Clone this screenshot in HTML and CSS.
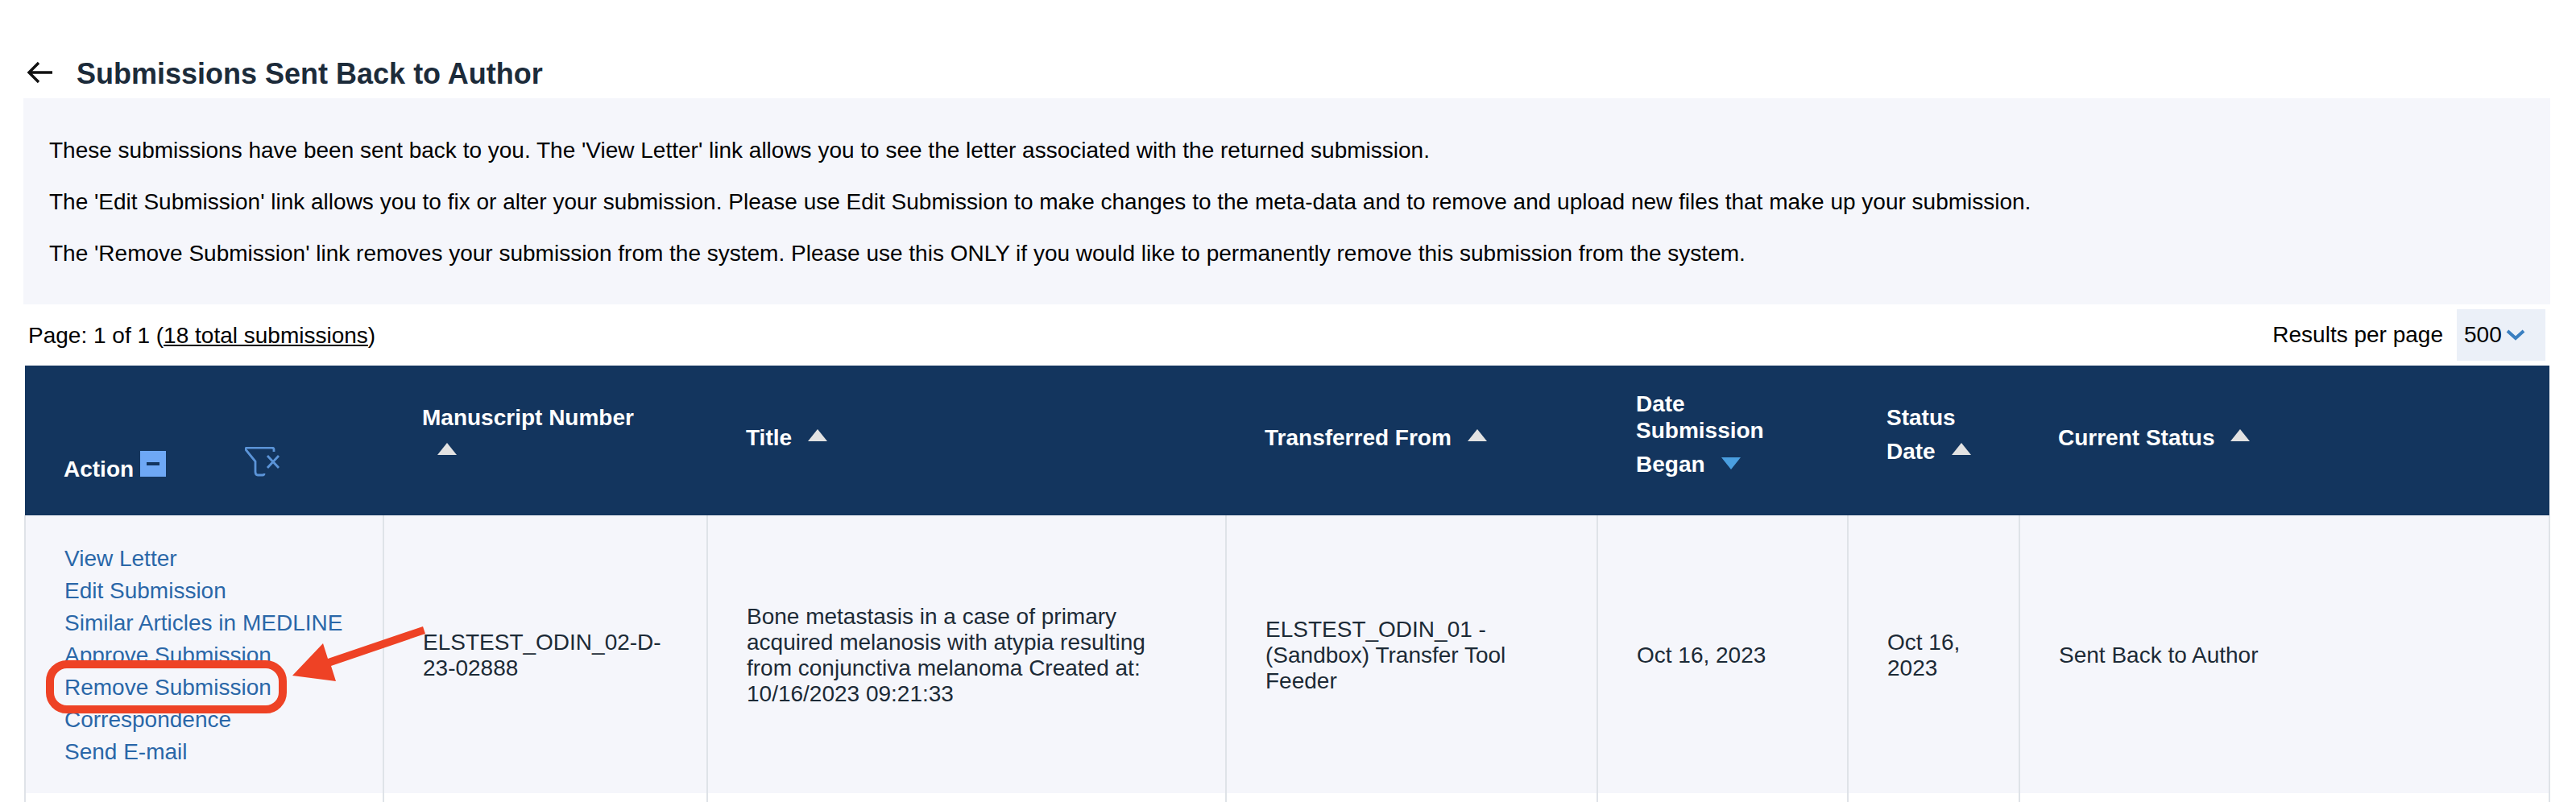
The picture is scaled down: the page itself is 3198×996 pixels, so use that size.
FILE: index.html
```html
<!DOCTYPE html>
<html lang="en">
<head>
    <meta charset="UTF-8">
    <meta name="viewport" content="width=device-width, initial-scale=1.0">
    <title>Submissions Sent Back to Author</title>
    <link rel="stylesheet" href="styles.css">
</head>
<body>
    <div class="page-title">
        <svg class="back-icon" viewBox="0 0 32 28" width="32" height="28">
            <path d="M32 14H3M15 2L3 14l12 12" fill="none" stroke="#111" stroke-width="3.4"/>
        </svg>
        <h1>Submissions Sent Back to Author</h1>
    </div>

    <div class="intro">
        <p>These submissions have been sent back to you. The 'View Letter' link allows you to see the letter associated with the returned submission.</p>
        <p>The 'Edit Submission' link allows you to fix or alter your submission. Please use Edit Submission to make changes to the meta-data and to remove and upload new files that make up your submission.</p>
        <p>The 'Remove Submission' link removes your submission from the system. Please use this ONLY if you would like to permanently remove this submission from the system.</p>
    </div>

    <div class="pager">
        <div>Page: 1 of 1 (<a href="#" class="total-link">18 total submissions</a>)</div>
        <div class="per-page">
            <span>Results per page</span>
            <div class="per-page-select">500
                <svg viewBox="0 0 24 14" width="24" height="14">
                    <path d="M2 2l10 9L22 2" fill="none" stroke="#3a7fc0" stroke-width="4"/>
                </svg>
            </div>
        </div>
    </div>

    <table class="results">
        <colgroup>
            <col class="col-action">
            <col class="col-number">
            <col class="col-title">
            <col class="col-from">
            <col class="col-began">
            <col class="col-date">
            <col class="col-status">
        </colgroup>
        <thead>
            <tr>
                <th class="action-head">
                    <div class="action-tools">
                        <span class="action-label">Action</span>
                        <span class="collapse-btn"></span>
                        <svg class="filter-icon" viewBox="0 0 44 37" width="44" height="37">
                            <path d="M36 6V3Q36 1 33 1H3Q0 1 1.5 4L13 18V31Q13 35 16 35H22Q24 35 24 33" fill="none" stroke="#5b94d8" stroke-width="2.8"/>
                            <path d="M28 11l14 15M42 11L28 26" fill="none" stroke="#5b94d8" stroke-width="2.8"/>
                        </svg>
                    </div>
                </th>
                <th>Manuscript Number<br><span class="sort up solo"></span></th>
                <th>Title<span class="sort up"></span></th>
                <th>Transferred From<span class="sort up"></span></th>
                <th>Date<br>Submission<br>Began<span class="sort down"></span></th>
                <th>Status<br>Date<span class="sort up"></span></th>
                <th>Current Status<span class="sort up"></span></th>
            </tr>
        </thead>
        <tbody>
            <tr class="filled">
                <td>
                    <a href="#" class="action-link">View Letter</a>
                    <a href="#" class="action-link">Edit Submission</a>
                    <a href="#" class="action-link">Similar Articles in MEDLINE</a>
                    <a href="#" class="action-link">Approve Submission</a>
                    <a href="#" class="action-link">Remove Submission</a>
                    <a href="#" class="action-link">Correspondence</a>
                    <a href="#" class="action-link">Send E-mail</a>
                </td>
                <td>ELSTEST_ODIN_02-D-23-02888</td>
                <td>Bone metastasis in a case of primary acquired melanosis with atypia resulting from conjunctiva melanoma Created at: 10/16/2023 09:21:33</td>
                <td>ELSTEST_ODIN_01 - (Sandbox) Transfer Tool Feeder</td>
                <td>Oct 16, 2023</td>
                <td>Oct 16, 2023</td>
                <td>Sent Back to Author</td>
            </tr>
            <tr class="next-row">
                <td></td><td></td><td></td><td></td><td></td><td></td><td></td>
            </tr>
        </tbody>
    </table>

    <div class="mark-box"></div>
    <svg class="mark-arrow" viewBox="0 0 3198 996" width="3198" height="996">
        <polygon points="525,778 528,787 411,827 417,846 363,839 401,799 407,818" fill="#ee4225"/>
    </svg>
</body>
</html>
```

FILE: styles.css
```css
html, body {
    height: 996px;
}
body {
    margin: 0;
    padding: 0 34px 0 30px;
    font-family: "Liberation Sans", Arial, sans-serif;
    font-size: 28px;
    color: #000;
    background: #fff;
    position: relative;
    overflow: hidden;
}
.page-title {
    height: 122px;
    padding: 72px 0 0 3px;
    box-sizing: border-box;
    display: flex;
    align-items: flex-start;
    gap: 30px;
}
.back-icon {
    flex: none;
    margin-top: 4px;
}
h1 {
    margin: 0;
    font-size: 36px;
    line-height: 40px;
    font-weight: bold;
    color: #1c2b3a;
}
.intro {
    height: 256px;
    margin-left: -1px;
    margin-right: -2px;
    padding: 48px 0 0 32px;
    box-sizing: border-box;
    background: #f5f6fb;
}
.intro p {
    margin: 0 0 31px;
    line-height: 33px;
}
.pager {
    height: 76px;
    padding: 6px 4px 0 5px;
    box-sizing: border-box;
    display: flex;
    justify-content: space-between;
    align-items: flex-start;
}
.pager > div:first-child {
    padding-top: 15px;
    line-height: 36px;
}
.total-link {
    color: #000;
}
.per-page {
    display: flex;
    gap: 17px;
}
.per-page span {
    line-height: 64px;
}
.per-page-select {
    width: 110px;
    height: 64px;
    padding-left: 9px;
    box-sizing: border-box;
    background: #ebf0f8;
    display: flex;
    align-items: center;
    gap: 5px;
}
.results {
    width: 3134px;
    table-layout: fixed;
    border-collapse: collapse;
}
.col-action { width: 445px; }
.col-number { width: 402px; }
.col-title { width: 644px; }
.col-from { width: 461px; }
.col-began { width: 311px; }
.col-date { width: 213px; }
.col-status { width: 658px; }
.results th {
    height: 186px;
    padding: 0 48px;
    box-sizing: border-box;
    background: #13355e;
    color: #fff;
    text-align: left;
    font-size: 28px;
    line-height: 33px;
    vertical-align: middle;
}
.results th.action-head {
    vertical-align: bottom;
    padding-bottom: 41px;
}
.action-tools {
    display: flex;
    align-items: flex-end;
}
.action-label {
    line-height: 32px;
}
.collapse-btn {
    width: 32px;
    height: 32px;
    margin: 0 0 7px 8px;
    background: #6ea8f5;
    position: relative;
}
.collapse-btn::after {
    content: "";
    position: absolute;
    left: 8px;
    top: 14px;
    width: 16px;
    height: 4px;
    background: #13355e;
}
.filter-icon {
    margin: 0 0 7px 98px;
}
/* the arrow makes its line box taller, the header lines rely on that */
.sort {
    display: inline-block;
    margin-left: 20px;
    vertical-align: -23px;
    border-left: 12px solid transparent;
    border-right: 12px solid transparent;
}
.sort.up {
    margin-top: 15px;
    margin-bottom: 28px;
    border-bottom: 15px solid #e2e2e2;
}
.sort.down {
    margin-top: 17px;
    margin-bottom: 26px;
    border-top: 15px solid #4a9fe0;
}
.sort.solo {
    margin-left: 19px;
}
.results td {
    padding: 2px 48px 0;
    box-sizing: border-box;
    border: 2px solid #dfe3e8;
    border-top: none;
    border-bottom: none;
    line-height: 32px;
    color: #1c2a36;
    vertical-align: middle;
}
.results td:first-child {
    padding-right: 20px;
}
.filled td {
    height: 345px;
    background: #f5f6fb;
}
.next-row td {
    height: 11px;
    padding: 0;
    background: #fff;
}
.action-link {
    display: block;
    line-height: 40px;
    color: #2a67a8;
    text-decoration: none;
}
.mark-box {
    position: absolute;
    left: 57px;
    top: 820px;
    width: 299px;
    height: 66px;
    box-sizing: border-box;
    border: 10px solid #ee4225;
    border-radius: 26px;
}
.mark-arrow {
    position: absolute;
    left: 0;
    top: 0;
}
```
